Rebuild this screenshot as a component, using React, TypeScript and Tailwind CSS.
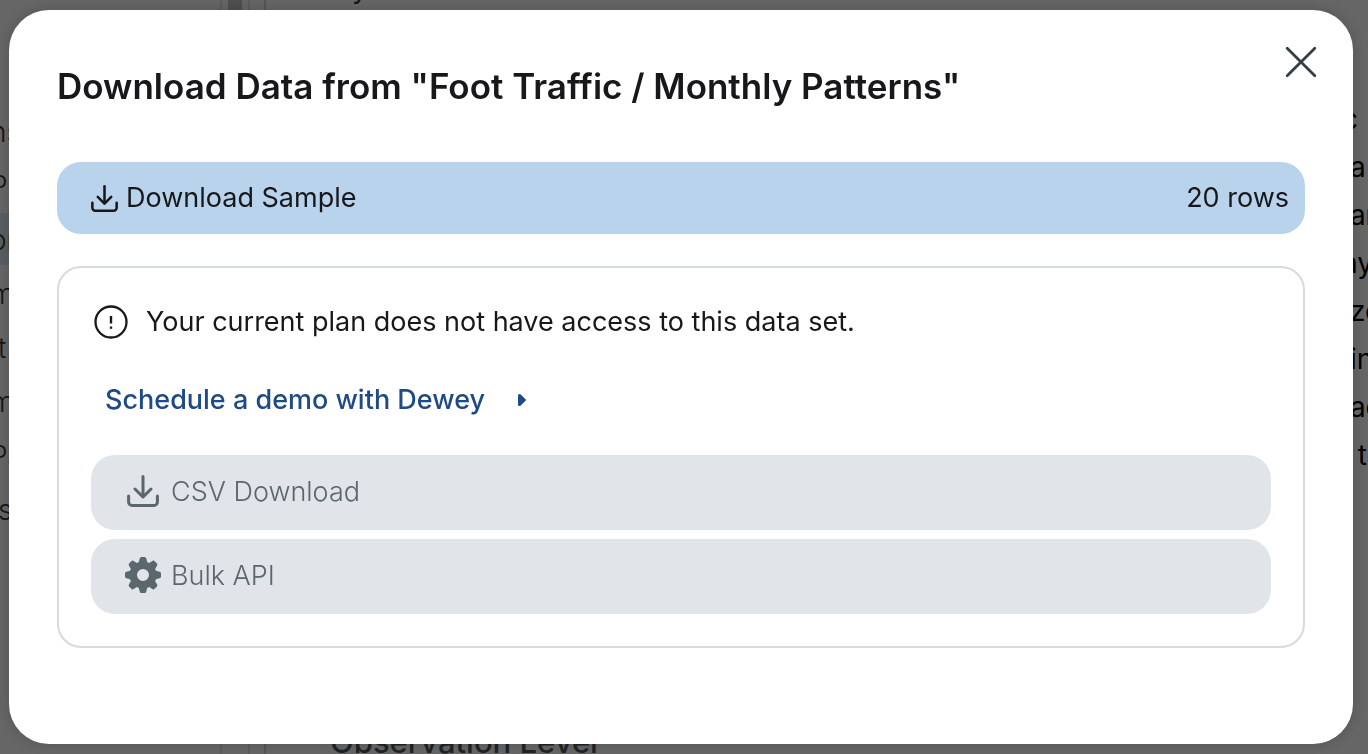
import { useState } from "react";
import type { ReactNode } from "react";

const SIDEBAR_ITEMS = [
  { label: "ns", active: false },
  { label: "P", active: false },
  { label: "or", active: true },
  { label: "m", active: false },
  { label: " t", active: false },
  { label: "m", active: false },
  { label: "Pa", active: false },
  { label: " s", active: false },
];

const SUMMARY_LINES = ["c", " a", " ar", "ay", " ze", " in", " ac", "  t"];

function DownloadIcon({ className }: { className: string }) {
  return (
    <svg
      className={className}
      viewBox="0 0 32 32"
      fill="none"
      stroke="currentColor"
      strokeWidth="3"
      strokeLinecap="round"
      strokeLinejoin="round"
      aria-hidden="true"
    >
      <path d="M16 1.5v20" />
      <path d="M8 14 16 22l8-8" />
      <path d="M1.6 21v6a3.5 3.5 0 0 0 3.5 3.5h21.8a3.5 3.5 0 0 0 3.5-3.5v-6" />
    </svg>
  );
}

function GearIcon() {
  return (
    <svg className="size-9" viewBox="0 0 36 36" aria-hidden="true">
      <circle cx="18" cy="18" r="9.8" fill="none" stroke="currentColor" strokeWidth="7.6" />
      {[0, 45, 90, 135, 180, 225, 270, 315].map((angle) => (
        <path
          key={angle}
          d="M13.6 6 14.7 1.5Q15 0 16.5 0h3Q21 0 21.3 1.5L22.4 6z"
          fill="currentColor"
          transform={`rotate(${angle} 18 18)`}
        />
      ))}
    </svg>
  );
}

function AlertIcon() {
  return (
    <svg className="size-[34px] shrink-0" viewBox="0 0 34 34" fill="none" stroke="currentColor" aria-hidden="true">
      <circle cx="17" cy="17" r="15.5" strokeWidth="2.3" />
      <path d="M17 11v7.5" strokeWidth="2.4" />
      <path d="M17 21.5v2.3" strokeWidth="2.4" />
    </svg>
  );
}

function PlanButton({ icon, label }: { icon: ReactNode; label: string }) {
  return (
    <button
      type="button"
      disabled
      className="flex h-[75px] w-full items-center gap-2.5 rounded-3xl bg-[#e1e5ea] pl-[34px] text-left font-light text-[#5c666d]"
    >
      <span className="flex h-10 w-9 items-center justify-center pb-1">{icon}</span>
      <span>{label}</span>
    </button>
  );
}

function DatasetPage() {
  return (
    <div className="flex h-screen overflow-hidden bg-white text-[28px] text-[#2f363c]" aria-hidden="true">
      <aside className="w-[222px] shrink-0 border-r-2 border-gray-200 pt-[105px]">
        <ul className="-ml-2.5 font-light whitespace-pre">
          {SIDEBAR_ITEMS.map((item, i) => (
            <li
              key={i}
              className={item.active ? "mb-0.5 h-[52px] bg-[#e0ebf8] leading-[54px]" : "h-[54px] leading-[54px]"}
            >
              {item.label}
            </li>
          ))}
        </ul>
      </aside>
      <div className="w-7 shrink-0 border-r-2 border-gray-200 px-1.5">
        <div className="h-1/2 bg-[#c6c6c6]" />
      </div>
      <main className="ml-3.5 flex min-w-0 grow flex-col border-l-2 border-[#d0d9e2]">
        <div className="h-[95px] pl-[86px]">
          <p className="-mt-9 leading-[48px]">y</p>
        </div>
        <div className="flex grow justify-end overflow-hidden text-black">
          <div className="w-[26px]">
            {SUMMARY_LINES.map((line) => (
              <p key={line} className="h-12 whitespace-pre leading-[48px]">
                {line}
              </p>
            ))}
          </div>
        </div>
        <h2 className="h-9 pl-16 text-[31px] leading-[48px] font-medium text-[#505a62]">Observation Level</h2>
      </main>
    </div>
  );
}

function DownloadDialog({ onClose }: { onClose: () => void }) {
  return (
    <div className="fixed inset-0 flex bg-black/60 py-2.5 pr-[15px] pl-[9px]">
      <div
        role="dialog"
        aria-modal="true"
        aria-labelledby="download-title"
        className="relative grow overflow-y-auto rounded-[40px] bg-white p-12 text-[27px] text-[#16181a] shadow-[0_0_16px_rgba(0,0,0,0.2)]"
      >
        <button
          type="button"
          aria-label="Close"
          onClick={onClose}
          className="absolute top-8 right-8 flex size-10 items-center justify-center text-[#343e46]"
        >
          <svg className="size-8" viewBox="0 0 32 32" stroke="currentColor" strokeWidth="2.8" strokeLinecap="round">
            <path d="M2.2 2.2l27.6 27.6M29.8 2.2 2.2 29.8" />
          </svg>
        </button>

        <h1 id="download-title" className="mb-12 text-[35px] leading-14 font-semibold">
          Download Data from "Foot Traffic / Monthly Patterns"
        </h1>

        <button
          type="button"
          className="mb-8 flex h-[72px] w-full items-center gap-2 rounded-3xl bg-[#b9d3ed] pr-4 pl-[34px]"
        >
          <DownloadIcon className="size-[27px]" />
          <span>Download Sample</span>
          <span className="ml-auto">20 rows</span>
        </button>

        <section className="rounded-3xl border-2 border-[#d5dbe1] p-8">
          <div className="mb-8 flex h-11 items-center gap-[18px] pl-[3px]">
            <AlertIcon />
            <p>Your current plan does not have access to this data set.</p>
          </div>
          <a href="#demo" className="mb-[31px] ml-3.5 flex h-12 w-fit items-center gap-8 font-medium text-[#1e4b87]">
            Schedule a demo with Dewey
            <svg className="h-3 w-2.5" viewBox="0 0 10 12" fill="currentColor" aria-hidden="true">
              <path d="M1 1.5Q1 0 2.5 0 3.2 0 3.7.6L8.8 5.4q.5.6 0 1.2L3.7 11.4q-.5.6-1.2.6Q1 12 1 10.5z" />
            </svg>
          </a>
          <div className="flex flex-col gap-[9px]">
            <PlanButton icon={<DownloadIcon className="size-8" />} label="CSV Download" />
            <PlanButton icon={<GearIcon />} label="Bulk API" />
          </div>
        </section>
      </div>
    </div>
  );
}

export default function App() {
  const [open, setOpen] = useState(true);

  return (
    <div className="font-['Inter','Liberation_Sans',sans-serif]">
      <DatasetPage />
      {open && <DownloadDialog onClose={() => setOpen(false)} />}
    </div>
  );
}
